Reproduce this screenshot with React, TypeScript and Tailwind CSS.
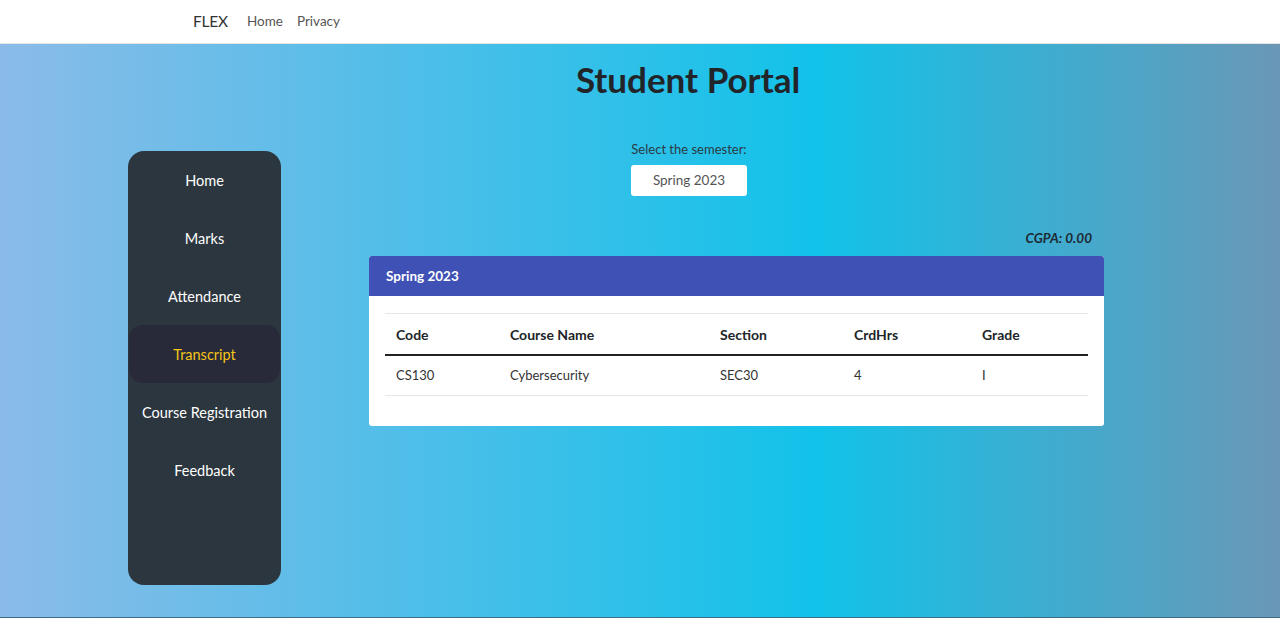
import React from 'react';

const menu = ['Home', 'Marks', 'Attendance', 'Transcript', 'Course Registration', 'Feedback'];

const rows = [{ code: 'CS130', name: 'Cybersecurity', section: 'SEC30', crd: '4', grade: 'I' }];

export default function App() {
  return (
    <div className="w-[1280px] h-[618px] overflow-hidden font-['Lato',sans-serif]">
      {/* Navbar */}
      <nav className="h-[44px] bg-white border-b border-[#e5e5e5] shadow-[0_1px_3px_rgba(0,0,0,0.08)] flex items-center pl-[193px]">
        <span className="text-[15.5px] text-[#333] mr-[19px] tracking-[-0.2px]">FLEX</span>
        <a className="text-[13.5px] text-[#555] mr-[14px]">Home</a>
        <a className="text-[13.5px] text-[#555]">Privacy</a>
      </nav>

      {/* Body */}
      <div className="h-[573px] bg-[linear-gradient(to_right,#8bbbe8_0%,#12c2e9_64%,#6b97b6_100%)] pt-[15px]">
        <h1 className="text-[35px] leading-[40px] font-bold text-[#212529] text-center pl-[96px]">Student Portal</h1>

        <div className="flex mt-[41px]">
          {/* Sidebar */}
          <aside className="ml-[128px] mt-[11px] w-[153px] h-[434px] bg-[#2c363e] rounded-[16px] px-[1px]">
            {menu.map((m) => (
              <div
                key={m}
                className={`h-[58px] pt-[1px] flex items-center justify-center text-[14.5px] rounded-[14px] ${
                  m === 'Transcript' ? 'bg-[#292a39] text-[#f5c518]' : 'text-white'
                }`}
              >
                {m}
              </div>
            ))}
          </aside>

          {/* Main */}
          <main className="ml-[88px] w-[735px]">
            <div className="mr-[95px] flex flex-col items-center">
              <label className="text-[13px] leading-[18px] text-[#2b3a44]">Select the semester:</label>
              <div className="mt-[7px] w-[116px] h-[31px] bg-white rounded-[3px] flex items-center justify-center text-[13.5px] text-[#555]">
                Spring 2023
              </div>
            </div>

            <div className="mt-[33px] pr-[12px] text-right text-[13.5px] leading-[18px] font-bold italic text-[#1e2a33]">
              CGPA: 0.00
            </div>

            <div className="mt-[9px] bg-white rounded-[3px] overflow-hidden">
              <div className="h-[40px] bg-[#3f51b5] flex items-center pl-[17px] pt-[1px] text-[13.5px] font-bold text-white">
                Spring 2023
              </div>
              <div className="pt-[17px] pb-[30px] px-[16px]">
                <table className="w-full border-collapse text-[13px] text-[#212529]">
                  <thead>
                    <tr className="h-[41px] border-t border-[#e6e6e6] border-b-2 border-b-[#222] text-[14px]">
                      <th className="w-[115px] text-left font-bold pl-[11px] pt-[2px]">Code</th>
                      <th className="w-[210px] text-left font-bold pl-[10px] pt-[2px]">Course Name</th>
                      <th className="w-[134px] text-left font-bold pl-[10px] pt-[2px]">Section</th>
                      <th className="w-[128px] text-left font-bold pl-[10px] pt-[2px]">CrdHrs</th>
                      <th className="text-left font-bold pl-[10px] pt-[2px]">Grade</th>
                    </tr>
                  </thead>
                  <tbody>
                    {rows.map((r) => (
                      <tr key={r.code} className="h-[41px] border-b border-[#e6e6e6] text-[#333]">
                        <td className="pl-[11px]">{r.code}</td>
                        <td className="pl-[10px]">{r.name}</td>
                        <td className="pl-[10px]">{r.section}</td>
                        <td className="pl-[10px]">{r.crd}</td>
                        <td className="pl-[10px]">{r.grade}</td>
                      </tr>
                    ))}
                  </tbody>
                </table>
              </div>
            </div>
          </main>
        </div>
      </div>
      <div className="h-[1px] bg-[#3f6c86]" />
    </div>
  );
}
